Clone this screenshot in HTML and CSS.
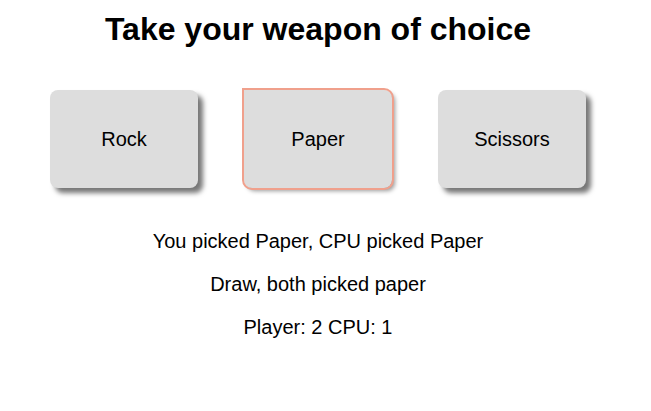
FILE: index.html
```html
<!DOCTYPE html>
<html>
<head>
<meta charset="utf-8">
<link rel="stylesheet" href="styles.css">
</head>
<body>
<main class="game">
  <h1 class="title">Take your weapon of choice</h1>
  <div class="choices">
    <button class="choice">Rock</button>
    <button class="choice active">Paper</button>
    <button class="choice">Scissors</button>
  </div>
  <p class="line">You picked Paper, CPU picked Paper</p>
  <p class="line">Draw, both picked paper</p>
  <p class="line">Player: 2 CPU: 1</p>
</main>
</body>
</html>
```
FILE: styles.css
```css
html, body {
  margin: 0;
  padding: 0;
  background: #fff;
}
body {
  font-family: "Liberation Sans", Arial, sans-serif;
  color: #000;
}
.game {
  width: 636px;
  display: flex;
  flex-direction: column;
  align-items: center;
}
.title {
  font-size: 32px;
  font-weight: bold;
  margin: 11px 0 0;
  line-height: 37px;
}
.choices {
  display: flex;
  gap: 46px;
  margin-top: 42px;
  margin-bottom: 42px;
}
.choice {
  width: 148px;
  height: 98px;
  border: none;
  border-radius: 8px;
  background: #dddddd;
  font-family: "Liberation Sans", Arial, sans-serif;
  font-size: 20px;
  color: #000;
  box-shadow: 5px 5px 5px #777;
  padding: 0;
}
.choice.active {
  outline: 2px solid #f0a08c;
  border-radius: 0 8px 8px 8px;
  box-shadow: 3px 3px 4px #999;
}
.line {
  font-size: 20px;
  margin: 0;
  line-height: 23px;
  margin-bottom: 20px;
}
```
